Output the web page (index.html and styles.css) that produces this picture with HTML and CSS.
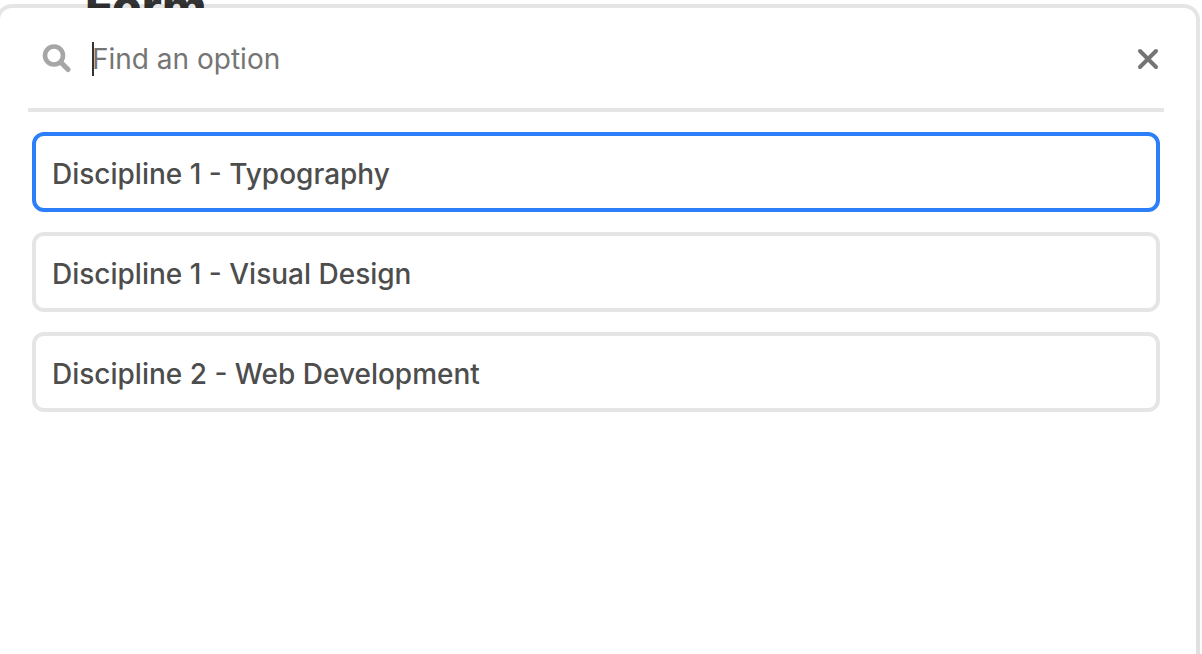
FILE: index.html
```html
<!DOCTYPE html>
<html lang="en">
<head>
<meta charset="utf-8">
<title>Find an option</title>
<link rel="stylesheet" href="styles.css">
</head>
<body>
<main class="page">
  <h1 class="page-title">Form</h1>
  <section class="picker">
    <div class="search">
      <svg class="search-icon" viewBox="0 0 30 30" aria-hidden="true"><circle cx="12" cy="11.5" r="9"/><path d="M19 18.5l7 7" stroke-width="5.2"/></svg>
      <div class="field">
        <input class="search-input" id="find" type="text" placeholder="Find an option" aria-label="Find an option">
      </div>
      <button class="close" type="button" aria-label="Close"><svg class="close-icon" viewBox="0 0 24 24" aria-hidden="true"><path d="M4 4l16 16M20 4L4 20"/></svg></button>
    </div>
    <div class="options">
      <button class="option option-active" type="button">Discipline 1 - Typography</button>
      <button class="option" type="button">Discipline 1 - Visual Design</button>
      <button class="option" type="button">Discipline 2 - Web Development</button>
    </div>
  </section>
</main>
</body>
</html>
```
FILE: styles.css
```css
* {
  box-sizing: border-box;
}

body {
  margin: 0;
  overflow: hidden;
  background: linear-gradient(#fff 120px, #fafafa 120px);
  font-family: Inter, "Liberation Sans", sans-serif;
}

.page {
  position: relative;
  min-height: 100vh;
}

.page-title {
  position: absolute;
  top: -18px;
  left: 85px;
  margin: 0;
  font-size: 48px;
  line-height: 48px;
  font-weight: 800;
  color: #333;
}

.picker {
  position: absolute;
  inset: 4px 2px -20px -4px;
  padding: 0 32px 0 28px;
  border: 4px solid rgba(0, 0, 0, 0.1);
  border-radius: 16px;
  background: #fff;
  background-clip: padding-box;
}

.search {
  display: flex;
  align-items: center;
  height: 104px;
  padding: 2px 4px 0 14px;
  border-bottom: 4px solid #e5e5e5;
}

.search-icon {
  width: 30px;
  height: 30px;
  fill: none;
  stroke: #a6a6a6;
  stroke-width: 4.6;
  stroke-linecap: round;
}

.field {
  position: relative;
  flex: 1;
  display: flex;
  margin-left: 20px;
}

.field::before {
  content: "";
  position: absolute;
  top: 0;
  bottom: 0;
  left: 0;
  width: 2px;
  background: #333;
}

.search-input {
  flex: 1;
  min-width: 0;
  height: 34px;
  padding: 0;
  border: 0;
  outline: 0;
  background: none;
  font: 400 28px/34px Inter, "Liberation Sans", sans-serif;
  color: #333;
  caret-color: transparent;
}

.search-input::placeholder {
  color: #757575;
  opacity: 1;
}

.close {
  display: flex;
  padding: 0;
  border: 0;
  background: none;
}

.close-icon {
  width: 24px;
  height: 24px;
  fill: none;
  stroke: #757575;
  stroke-width: 4;
  stroke-linecap: round;
}

.options {
  display: flex;
  flex-direction: column;
  gap: 20px;
  padding: 20px 4px;
}

.option {
  height: 80px;
  padding: 4px 16px 0;
  border: 4px solid #e5e5e5;
  border-radius: 12px;
  background: #fff;
  font: 500 28px/36px Inter, "Liberation Sans", sans-serif;
  text-align: left;
  color: #4d4d4d;
}

.option-active {
  border-color: #2d7ff9;
}
```
